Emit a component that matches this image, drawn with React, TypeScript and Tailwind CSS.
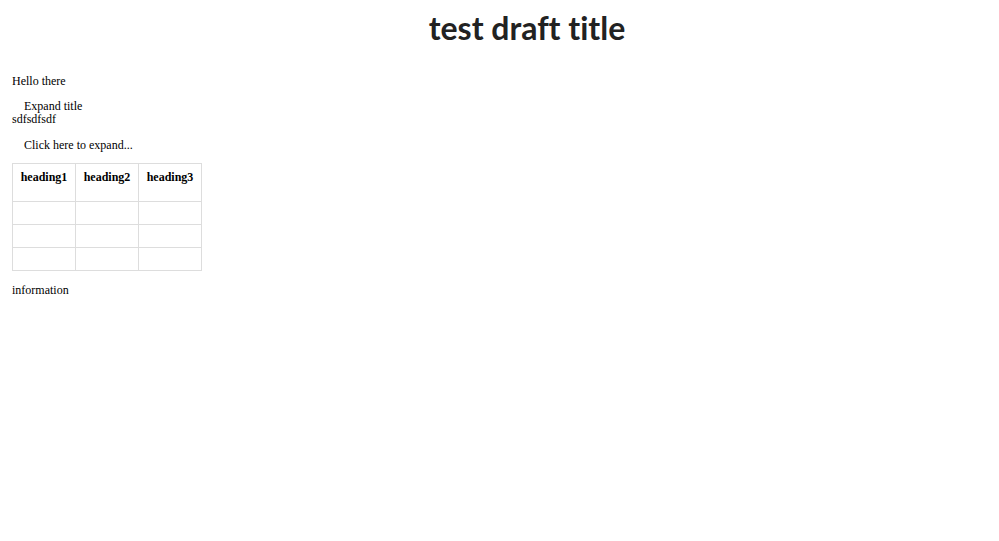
import React from "react";

export default function App() {
  const rows = [0, 1, 2];
  return (
    <div className="min-h-[541px] bg-white px-3 text-[12px] leading-[13px] text-black" style={{ fontFamily: '"Liberation Serif", serif' }}>
      <div className="flex justify-center pl-[55px] pt-[8px]">
        <h1 className="text-[32px] font-bold leading-[40px] text-[#222] [font-variant-ligatures:none]" style={{ fontFamily: 'Lato, sans-serif' }}>
          test draft title
        </h1>
      </div>
      <p className="mt-[27px]">Hello there</p>
      <p className="mt-[12px] pl-3">Expand title</p>
      <p>sdfsdfsdf</p>
      <p className="mt-[13px] pl-3">Click here to expand...</p>
      <table className="mt-[11px] table-fixed border-collapse">
        <thead>
          <tr className="h-[38px]">
            <th className="w-[63px] border border-[#dddddd] px-1 pt-[7px] align-top font-bold">heading1</th>
            <th className="w-[63px] border border-[#dddddd] px-1 pt-[7px] align-top font-bold">heading2</th>
            <th className="w-[63px] border border-[#dddddd] px-1 pt-[7px] align-top font-bold">heading3</th>
          </tr>
        </thead>
        <tbody>
          {rows.map((r) => (
            <tr key={r} className="h-[23px]">
              <td className="border border-[#dddddd]"></td>
              <td className="border border-[#dddddd]"></td>
              <td className="border border-[#dddddd]"></td>
            </tr>
          ))}
        </tbody>
      </table>
      <p className="mt-[13px]">information</p>
    </div>
  );
}
